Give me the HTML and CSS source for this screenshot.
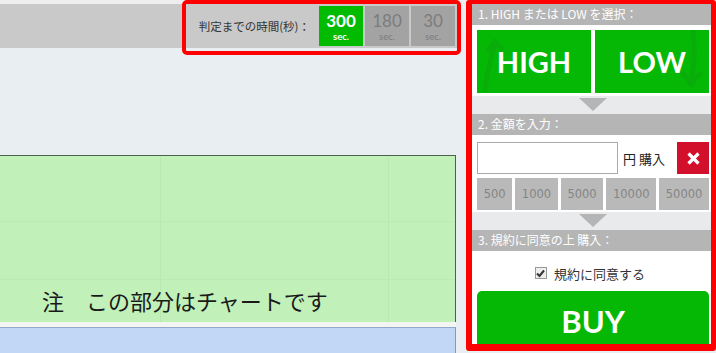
FILE: index.html
```html
<!DOCTYPE html>
<html lang="ja">
<head>
    <meta charset="UTF-8">
    <meta name="viewport" content="width=device-width, initial-scale=1.0">
    <title>Trade Panel</title>
    <link rel="stylesheet" href="styles.css">
</head>
<body>
    <div class="page">
        <div class="main">
            <div class="top">
                <div class="bar"></div>
                <div class="timer-box">
                    <div class="timer">
                        <span class="timer-label">判定までの時間(秒)：</span>
                        <div class="time active"><b>300</b><small>sec.</small></div>
                        <div class="time"><b>180</b><small>sec.</small></div>
                        <div class="time"><b>30</b><small>sec.</small></div>
                    </div>
                </div>
            </div>
            <div class="chart">
                <p class="chart-note">注　この部分はチャートです</p>
            </div>
            <div class="chart-gap"></div>
            <div class="sub-chart"></div>
        </div>

        <div class="panel">
            <div class="step-title">1. HIGH または LOW を選択：</div>
            <div class="step step-dir">
                <button class="dir high">
                    <svg class="dir-arrow" width="40" height="62" viewBox="0 0 40 62">
                        <path d="M8 62 C10 40 14 28 18 14 M10 22 L18 12 L26 20" fill="none" stroke="#09ad09" stroke-width="5"/>
                    </svg>
                    HIGH
                </button>
                <button class="dir low">
                    <svg class="dir-arrow" width="40" height="62" viewBox="0 0 40 62">
                        <path d="M24 0 C26 20 26 34 22 50 M13 42 L22 54 L32 42" fill="none" stroke="#09ad09" stroke-width="5"/>
                    </svg>
                    LOW
                </button>
            </div>
            <div class="step-arrow"><span></span></div>

            <div class="step-title">2. 金額を入力：</div>
            <div class="step step-amount">
                <div class="amount-row">
                    <input type="text" class="amount">
                    <span class="amount-unit">円 購入</span>
                    <button class="clear">
                        <svg width="13" height="13" viewBox="0 0 13 13">
                            <path d="M1.5 1.5 L11.5 11.5 M11.5 1.5 L1.5 11.5" stroke="#fff" stroke-width="3.2"/>
                        </svg>
                    </button>
                </div>
                <div class="presets">
                    <button>500</button>
                    <button>1000</button>
                    <button>5000</button>
                    <button>10000</button>
                    <button>50000</button>
                </div>
            </div>
            <div class="step-arrow"><span></span></div>

            <div class="step-title">3. 規約に同意の上 購入：</div>
            <div class="step step-buy">
                <label class="agree">
                    <span class="check">
                        <svg width="9" height="9" viewBox="0 0 9 9">
                            <path d="M1 4.5 L3.5 7 L8 1.5" fill="none" stroke="#333" stroke-width="2"/>
                        </svg>
                    </span>
                    規約に同意する
                </label>
                <button class="buy">BUY</button>
            </div>
        </div>
    </div>
</body>
</html>
```

FILE: styles.css
```css
body {
    margin: 0;
    font-family: "Noto Sans CJK JP", "Liberation Sans", sans-serif;
    background: #e9eef2;
    color: #333;
}

.page {
    display: flex;
    width: 716px;
    height: 353px;
    overflow: hidden;
}

/* left side: header bar + chart */
.main {
    width: 466px;
    flex: none;
}

.top {
    display: flex;
    align-items: flex-start;
}

.bar {
    flex: 1;
    height: 44px;
    border-top: 4px solid #eeeeee;
    background: #c9c9c9;
}

.timer-box {
    border: 4px solid #ff0000;
    border-radius: 5px;
    padding-bottom: 3px;
    margin-right: 5px;
    background: #e9eef2;
}

.timer {
    display: flex;
    align-items: center;
    height: 44px;
    padding: 0 2px 0 13px;
    background: #c9c9c9;
}

.timer-label {
    font-size: 11.5px;
    color: #333;
    margin-right: 7px;
}

.time {
    width: 44px;
    height: 40px;
    margin-left: 2px;
    background: #a3a3a3;
    color: #7c7c7c;
    display: flex;
    flex-direction: column;
    align-items: center;
    justify-content: center;
    font-family: "Lato", "Liberation Sans", sans-serif;
}

.time b {
    font-size: 17px;
    font-weight: normal;
    line-height: 21px;
}

.time small {
    font-size: 9.5px;
    line-height: 12px;
}

.time.active {
    background: #00bb00;
    color: #fff;
}

.time.active b,
.time.active small {
    font-weight: bold;
}

.chart {
    margin-top: 100px;
    width: 455px;
    height: 166px;
    border-top: 1px solid #4f5f4f;
    border-right: 1px solid #4f5f4f;
    background-color: #c1f1b9;
    background-image:
        linear-gradient(#b9e9b1, #b9e9b1),
        linear-gradient(#b9e9b1, #b9e9b1),
        linear-gradient(#bbebb3, #bbebb3),
        linear-gradient(#bbebb3, #bbebb3);
    background-size: 1px 100%, 1px 100%, 100% 1px, 100% 1px;
    background-position: 160px 0, 388px 0, 0 65px, 0 123px;
    background-repeat: no-repeat;
    display: flex;
    align-items: flex-end;
}

.chart-note {
    margin: 0 0 7px 42px;
    font-size: 22px;
    line-height: 30px;
    color: #1a1a1a;
}

.chart-gap {
    width: 456px;
    height: 5px;
    background: #f2f5f2;
}

.sub-chart {
    width: 455px;
    height: 40px;
    border-top: 1px solid #93a9c9;
    border-right: 1px solid #8a9ab0;
    background: #c2d7f5;
}

/* right side: order panel */
.panel {
    width: 250px;
    height: 351px;
    box-sizing: border-box;
    border: 6px solid #ff0000;
    border-top-width: 4px;
    border-right-width: 5px;
    border-bottom-width: 7px;
    border-radius: 3px;
    background: #fff;
    overflow: hidden;
    display: flex;
    flex-direction: column;
}

.step-title {
    height: 21px;
    line-height: 20px;
    padding-left: 6px;
    background: #b5b5b5;
    color: #fff;
    font-size: 12px;
    border-bottom: 1px solid #fff;
    flex: none;
}

.step {
    background: #fff;
    padding: 4px 2px 3px 5px;
    flex: none;
}

.step-dir {
    display: flex;
    gap: 4px;
}

button {
    font-family: inherit;
    border: none;
    cursor: pointer;
}

.dir {
    position: relative;
    flex: 1;
    height: 63px;
    background: #05b805;
    color: #fff;
    font-family: "Lato", "Liberation Sans", sans-serif;
    font-weight: bold;
    font-size: 29px;
    overflow: hidden;
}

.dir-arrow {
    position: absolute;
    top: 0;
}

.high .dir-arrow {
    left: 0;
}

.low .dir-arrow {
    right: 0;
}

.step-arrow {
    height: 18px;
    background: #e8eaec;
    display: flex;
    justify-content: center;
    padding-left: 3px;
    flex: none;
}

.step-arrow span {
    margin-top: 2px;
    border-left: 14px solid transparent;
    border-right: 14px solid transparent;
    border-top: 13px solid #b5b5b5;
}

.step-amount {
    padding-top: 6px;
    padding-bottom: 2px;
}

.amount-row {
    display: flex;
    align-items: center;
    height: 32px;
}

.amount {
    width: 141px;
    height: 32px;
    box-sizing: border-box;
    border: 1px solid #aaa;
    margin: 0;
}

.amount-unit {
    margin-left: 5px;
    font-size: 13px;
    color: #222;
}

.clear {
    margin-left: auto;
    width: 32px;
    height: 32px;
    background: #d2102c;
    display: flex;
    align-items: center;
    justify-content: center;
    padding: 0;
}

.presets {
    display: flex;
    gap: 3px;
    margin-top: 4px;
}

.presets button {
    flex: 1 1 auto;
    height: 32px;
    padding: 0 6px;
    background: #b9b9b9;
    color: #858585;
    font-size: 11.5px;
    font-family: "DejaVu Sans", "Liberation Sans", sans-serif;
}

.step-buy {
    padding-top: 11px;
    display: flex;
    flex-direction: column;
}

.agree {
    display: flex;
    align-items: center;
    justify-content: center;
    height: 20px;
    font-size: 13px;
    color: #333;
    padding-right: 6px;
}

.check {
    width: 10px;
    height: 10px;
    border: 1px solid #999;
    background: #eee;
    margin-right: 7px;
    display: flex;
    align-items: center;
    justify-content: center;
}

.buy {
    margin-top: 8px;
    height: 60px;
    border-radius: 5px 5px 0 0;
    background: #05b805;
    color: #fff;
    font-family: "Lato", "Liberation Sans", sans-serif;
    font-weight: bold;
    font-size: 31px;
}
```
